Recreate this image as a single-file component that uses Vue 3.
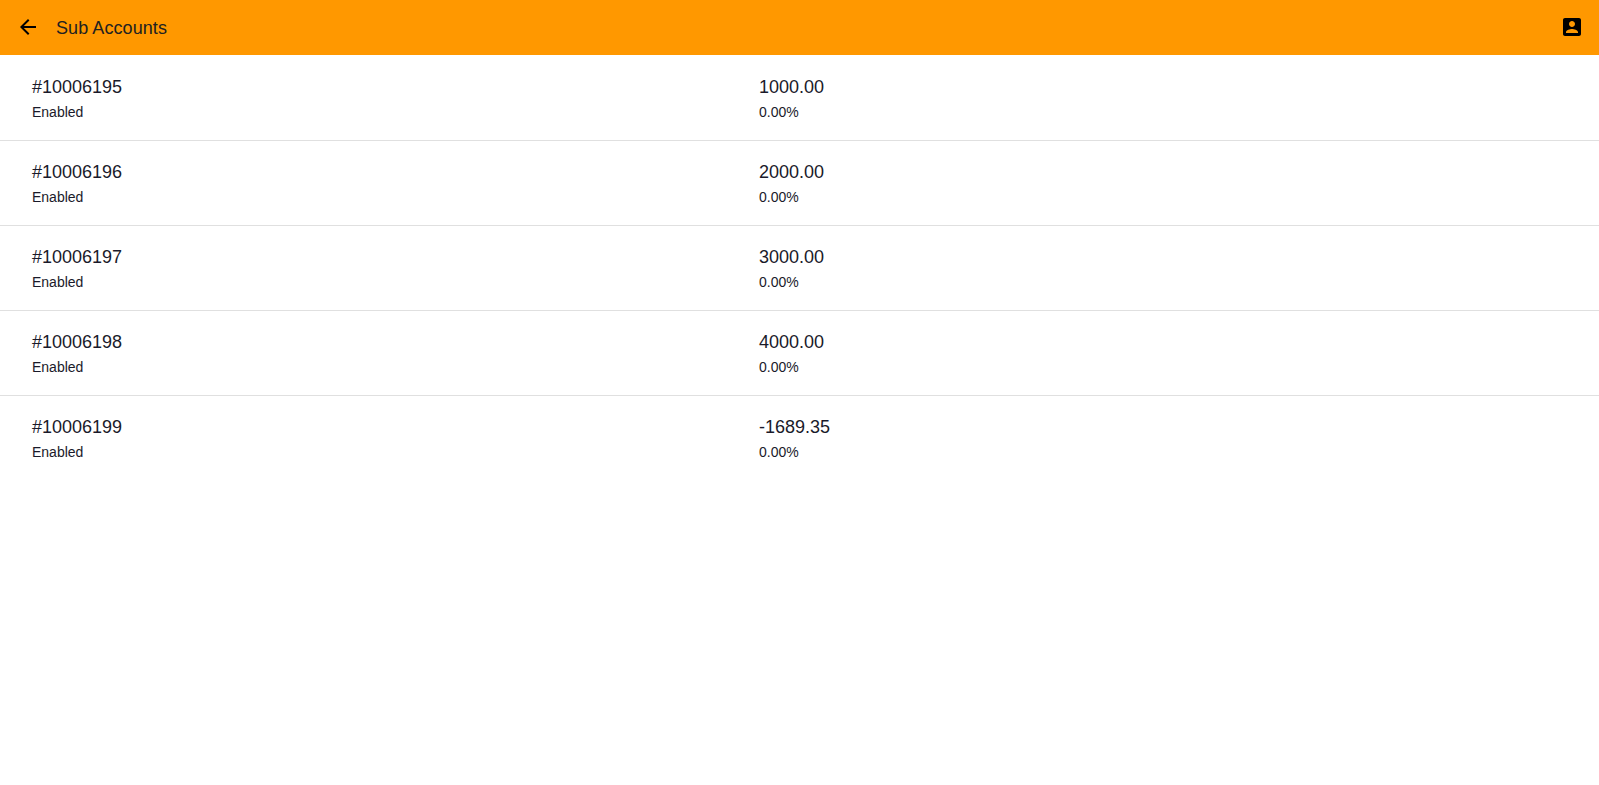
<script setup>
const accounts = [
  { id: '#10006195', status: 'Enabled', balance: '1000.00', percent: '0.00%' },
  { id: '#10006196', status: 'Enabled', balance: '2000.00', percent: '0.00%' },
  { id: '#10006197', status: 'Enabled', balance: '3000.00', percent: '0.00%' },
  { id: '#10006198', status: 'Enabled', balance: '4000.00', percent: '0.00%' },
  { id: '#10006199', status: 'Enabled', balance: '-1689.35', percent: '0.00%' }
]
</script>

<template>
  <div class="page">
    <header class="toolbar">
      <svg class="icon" width="24" height="24" viewBox="0 0 24 24">
        <path d="M20 11H7.83l5.59-5.59L12 4l-8 8 8 8 1.41-1.41L7.83 13H20v-2z" />
      </svg>
      <span class="title">Sub Accounts</span>
      <svg class="icon profile" width="24" height="24" viewBox="0 0 24 24">
        <path d="M3 5v14c0 1.1.89 2 2 2h14c1.1 0 2-.9 2-2V5c0-1.1-.9-2-2-2H5c-1.11 0-2 .9-2 2zm12 4c0 1.66-1.34 3-3 3s-3-1.34-3-3 1.34-3 3-3 3 1.34 3 3zm-9 8c0-2 4-3.1 6-3.1s6 1.1 6 3.1v1H6v-1z" />
      </svg>
    </header>

    <div class="list">
      <div v-for="account in accounts" :key="account.id" class="row">
        <div class="cell">
          <div class="main">{{ account.id }}</div>
          <div class="sub">{{ account.status }}</div>
        </div>
        <div class="cell">
          <div class="main">{{ account.balance }}</div>
          <div class="sub">{{ account.percent }}</div>
        </div>
      </div>
    </div>
  </div>
</template>

<style scoped>
.page {
  min-height: 785px;
  background: #fff;
  font-family: "Liberation Sans", Arial, sans-serif;
  color: #1a1a2a;
}

.toolbar {
  display: flex;
  align-items: center;
  height: 55px;
  padding: 0 15px 1px 16px;
  box-sizing: border-box;
  background: #ff9800;
}

.icon {
  flex: none;
  fill: #000;
}

.title {
  margin-left: 16px;
  padding-top: 2px;
  font-size: 18px;
  line-height: 24px;
  letter-spacing: 0.08px;
  color: #212121;
}

.profile {
  margin-left: auto;
}

.list {
  padding-top: 1px;
}

.row {
  display: grid;
  grid-template-columns: 727px 1fr;
  height: 85px;
  padding: 21px 0 0 32px;
  box-sizing: border-box;
  border-bottom: 1px solid #e0e0e0;
}

.row:last-child {
  border-bottom: none;
}

.main {
  font-size: 18px;
  line-height: 21px;
}

.sub {
  margin-top: 6px;
  font-size: 14px;
  line-height: 16px;
}
</style>
